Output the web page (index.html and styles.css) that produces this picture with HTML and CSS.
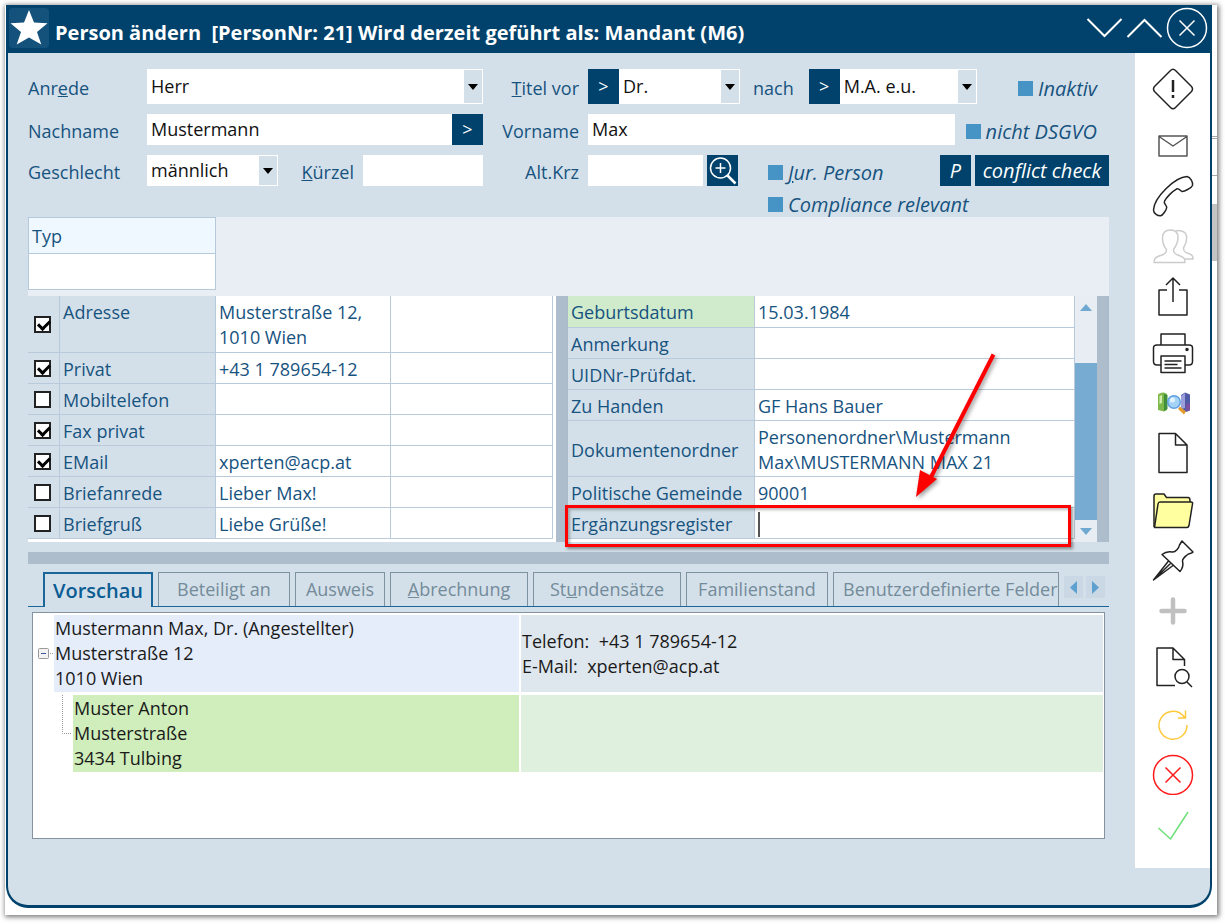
FILE: index.html
```html
<!DOCTYPE html>
<html lang="de">
<head>
<meta charset="utf-8">
<title>Person ändern</title>
<link rel="stylesheet" href="styles.css">
</head>
<body>
<div class="sheet">
<i class="edge-scroll"></i><i class="edge-line"></i><i class="edge-line edge-line-low"></i>
<main class="window">
  <header class="titlebar">
    <span class="star"><svg width="40" height="40" viewBox="0 0 40 40"><path fill="#fff" d="M20 2l5 12.500 13.500.8-10.500 8.700 4.300 12.500L20 29.500 7.700 36.500 12 24 1.500 15.300 15 14.500z"/></svg></span>
    <h1>Person ändern&nbsp; [PersonNr: 21] Wird derzeit geführt als: Mandant (M6)</h1>
    <div class="winbuttons">
      <button aria-label="Weiter"><svg width="37" height="20" viewBox="0 0 37 20"><path d="M1.500 1l17 17 17-17" fill="none" stroke="#fff" stroke-width="2"/></svg></button>
      <button aria-label="Zurück"><svg width="37" height="20" viewBox="0 0 37 20"><path d="M1.500 19l17-17 17 17" fill="none" stroke="#fff" stroke-width="2"/></svg></button>
      <button aria-label="Schließen"><svg width="42" height="42" viewBox="0 0 42 42" fill="none" stroke="#fff"><circle cx="21" cy="21" r="19.500" stroke-width="1.500"/><path d="M13.500 13.500l15 15m0-15l-15 15" stroke-width="1.500"/></svg></button>
    </div>
  </header>
  <div class="body">
    <div class="content">
      <form class="form">
        <div class="row row-tall">
          <label for="anrede">Anr<u>e</u>de</label>
          <div class="left"><span class="select grow"><select id="anrede"><option>Herr</option></select><i></i></span></div>
          <label class="second" for="titelvor"><u>T</u>itel vor</label>
          <div class="right">
            <button type="button" class="dark">&gt;</button><span class="select w-vor"><select id="titelvor"><option>Dr.</option></select><i></i></span>
            <label class="nach" for="titelnach">nach</label>
            <button type="button" class="dark">&gt;</button><span class="select w-nach"><select id="titelnach"><option>M.A. e.u.</option></select><i></i></span>
            <label class="check end"><input type="checkbox">Inaktiv</label>
          </div>
        </div>
        <div class="row">
          <label for="nachname">Nachname</label>
          <div class="left"><input class="grow" id="nachname" type="text" value="Mustermann"><button type="button" class="dark">&gt;</button></div>
          <label class="second" for="vorname">Vorname</label>
          <div class="right"><input class="grow" id="vorname" type="text" value="Max"><label class="check dsgvo"><input type="checkbox">nicht DSGVO</label></div>
        </div>
        <div class="row">
          <label for="geschlecht">Geschlecht</label>
          <div class="left"><span class="select w-sex"><select id="geschlecht"><option>männlich</option></select><i></i></span><label class="kuerzel" for="kuerzel"><u>K</u>ürzel</label><input class="grow" id="kuerzel" type="text"></div>
          <label class="second" for="altkrz">Alt.Krz</label>
          <div class="right">
            <input class="w-alt" id="altkrz" type="text"><button type="button" class="dark lens" aria-label="Suchen"><svg width="31" height="31" viewBox="0 0 31 31" fill="none" stroke="#fff"><circle cx="13.500" cy="13" r="10" stroke-width="1.500"/><path d="M8.500 13h10M13.500 8v10" stroke-width="1.500"/><path d="M20.500 20.500l8 8" stroke-width="2.500"/></svg></button>
            <label class="check jur"><input type="checkbox"><span><u>J</u>ur. Person</span></label>
            <span class="actions"><button type="button" class="dark ital">P</button><button type="button" class="dark ital conflict">conflict check</button></span>
          </div>
        </div>
        <div class="row row-last"><label class="check compliance"><input type="checkbox">Compliance relevant</label></div>
      </form>

      <section class="typpanel">
        <table class="typ"><tr><th>Typ</th></tr><tr><td></td></tr></table>
      </section>

      <section class="panes">
        <div class="pane-left">
        <table class="grid contact">
          <colgroup><col class="c-check"><col class="c-name"><col class="c-value"><col></colgroup>
          <tr><th><input type="checkbox" checked aria-label="Adresse"></th><th>Adresse</th><td>Musterstraße 12,<br>1010 Wien</td><td></td></tr>
          <tr><th><input type="checkbox" checked aria-label="Privat"></th><th>Privat</th><td>+43 1 789654-12</td><td></td></tr>
          <tr><th><input type="checkbox" aria-label="Mobiltelefon"></th><th>Mobiltelefon</th><td></td><td></td></tr>
          <tr><th><input type="checkbox" checked aria-label="Fax privat"></th><th>Fax privat</th><td></td><td></td></tr>
          <tr><th><input type="checkbox" checked aria-label="EMail"></th><th>EMail</th><td>xperten@acp.at</td><td></td></tr>
          <tr><th><input type="checkbox" aria-label="Briefanrede"></th><th>Briefanrede</th><td>Lieber Max!</td><td></td></tr>
          <tr><th><input type="checkbox" aria-label="Briefgruß"></th><th>Briefgruß</th><td>Liebe Grüße!</td><td></td></tr>
        </table>
        </div>
        <div class="vsplit"></div>
        <div class="pane-right">
          <table class="grid details">
            <colgroup><col class="c-label"><col></colgroup>
            <tr><th class="green">Geburtsdatum</th><td>15.03.1984</td></tr>
            <tr><th>Anmerkung</th><td></td></tr>
            <tr><th>UIDNr-Prüfdat.</th><td></td></tr>
            <tr><th>Zu Handen</th><td>GF Hans Bauer</td></tr>
            <tr><th>Dokumentenordner</th><td>Personenordner\Mustermann<br>Max\MUSTERMANN MAX 21</td></tr>
            <tr><th>Politische Gemeinde</th><td>90001</td></tr>
            <tr><th>Ergänzungsregister</th><td><i class="caret"></i></td></tr>
          </table>
          <div class="highlight"></div>
          <svg class="arrow" width="100" height="160" viewBox="0 0 100 160"><g fill="#f00"><path d="M86.500 9.500L22 136" stroke="#f00" stroke-width="4"/><path d="M9 152l4-27 17 9z"/></g></svg>
        </div>
        <div class="scroll"><button aria-label="Nach oben"><svg width="12" height="7"><path d="M0 7l6-7 6 7z" fill="#6fa8d0"/></svg></button><div class="track"></div><div class="thumb"></div><button aria-label="Nach unten"><svg width="12" height="7"><path d="M0 0l6 7 6-7z" fill="#6fa8d0"/></svg></button></div>
        <div class="vsplit"></div>
      </section>
      <div class="hsplit"></div>

      <nav class="tabs">
        <button class="tab active">Vorschau</button>
        <button class="tab t2">Beteiligt an</button>
        <button class="tab t3">Ausweis</button>
        <button class="tab t4"><u>A</u>brechnung</button>
        <button class="tab t5">St<u>u</u>ndensätze</button>
        <button class="tab t6">Familienstand</button>
        <button class="tab t7">Benutzerdefinierte Felder</button>
        <span class="tabnav"><button aria-label="Tabs links"><svg width="7" height="13"><path d="M7 0v13L0 6.500z" fill="#5ea1d0"/></svg></button><button aria-label="Tabs rechts"><svg width="7" height="13"><path d="M0 0v13l7-6.500z" fill="#5ea1d0"/></svg></button></span>
      </nav>

      <section class="tree">
        <div class="node">
          <span class="knob"><svg width="20" height="77" viewBox="0 0 20 77"><rect x="4.500" y="33.500" width="10" height="10" rx="1" fill="#f3f3f3" stroke="#999"/><path d="M7 38.500h5" stroke="#3b5aa5"/><path d="M16 38.500h4" stroke="#999" stroke-dasharray="1 1"/></svg></span>
          <p class="cell blue">Mustermann Max, Dr. (Angestellter)<br>Musterstraße 12<br>1010 Wien</p>
          <p class="cell pale info">Telefon:&nbsp; +43 1 789654-12<br>E-Mail:&nbsp; xperten@acp.at</p>
        </div>
        <div class="node child">
          <span class="knob"><svg width="39" height="77" viewBox="0 0 39 77"><path d="M28.500 0v38.500h9" fill="none" stroke="#999" stroke-dasharray="1 1"/></svg></span>
          <p class="cell lime">Muster Anton<br>Musterstraße<br>3434 Tulbing</p>
          <p class="cell mint"></p>
        </div>
      </section>
    </div>

    <aside class="tools">
      <div class="group">
        <button aria-label="Hinweis"><svg viewBox="0 0 42 42"><path d="M18.500 2.500q2.500-2.500 5 0l16 16q2 2.500 0 5l-16 16q-2.500 2.500-5 0l-16-16q-2-2.500 0-5z"/><path d="M21 12v12M21 27v3" stroke-width="2.500"/></svg></button>
      </div>
      <div class="group">
        <button aria-label="E-Mail"><svg viewBox="0 0 42 42"><path stroke="#555" d="M7 11h28v20H7zM7 11.500l14 9.500 14-9.500"/></svg></button>
        <button aria-label="Telefon"><svg viewBox="0 0 42 42"><path d="M35 1.500c-12 .5-33 21-33.500 33.500 0 3.500 4.500 6 7 5.800 2.500-.3 6-6.300 6.200-8.300.2-2-3.500-4-2.200-6.300 2-4 8-10 12.300-12.400 2.500-.8 3.200 2.300 5.200 2.600 2 .3 9.500-3.400 10.500-5.900.8-3-2-8.500-5.500-9z"/></svg></button>
        <button aria-label="Personen"><svg viewBox="0 0 42 42"><path stroke="#ccc" d="M2 37.500h31c0-5-2-5.500-6-7-4-1.300-5.500-2.500-5.500-6 3-4 4.500-8 4.500-12 0-5-3-7.500-7.500-7.500S10.500 7.500 10.500 13c0 4.500 1 8 4 11.500 0 3.500-1.500 4.700-6 6C4 32 2 33 2 37.500zM23.500 6.500c2-1.500 10-1.500 11 4.500.7 5-.5 8-3 12 0 3.500 1.500 4.500 5 5.500 3.500 1.500 4.500 2 4.500 5.500h-8"/></svg></button>
        <button aria-label="Teilen"><svg viewBox="0 0 42 42"><path d="M15 15H7v25h28V15h-8M21 27V3M14 10l7-7 7 7"/></svg></button>
      </div>
      <div class="group">
        <button aria-label="Drucken"><svg viewBox="0 0 42 42"><path d="M9 13V2h24v11M9 33H5q-3.500 0-3.500-3.500V16q0-3 3.500-3h32q3.500 0 3.500 3v13.500q0 3.500-3.500 3.500h-4M9 24h24v16.500H9zM12.500 29h17M12.500 32.500h13M12.500 36h17"/><circle cx="35" cy="17.500" r="1" fill="#222"/></svg></button>
        <button aria-label="Suche"><svg viewBox="0 0 42 42"><g stroke="none"><path fill="#7db84a" d="M6 13q0-2 6-2.500l3 1.500v16l-3 1.500-6-1.500z"/><path fill="#3f8f3c" d="M12 12l3.500 1v14L12 29z"/><path fill="#d3edb0" d="M7.500 14l2.500-1v8l-2.500 1z"/><path fill="#4f5ba6" d="M29 13l4-2.500 5 2v16l-4 1.500-5-3z"/><path fill="#9a9edb" d="M29 14l4-3v15l-4 1z"/><path fill="#7b4fa0" d="M34 22l4-1v7l-4 1z"/><circle cx="22" cy="20" r="7" fill="#5f9fe0"/><circle cx="22" cy="20" r="5.500" fill="#a5d3f7"/><circle cx="20.500" cy="18" r="2.500" fill="#e0f3ff"/><path fill="#e39a2d" d="M26 27l2-2.500 6 5-2 3z"/></g></svg></button>
        <button aria-label="Dokument"><svg viewBox="0 0 42 42"><path d="M7 1.500h16.500L35 13v27.500H7zM23.500 1.500V13H35"/></svg></button>
      </div>
      <div class="group">
        <button aria-label="Ordner"><svg viewBox="0 0 42 42"><path fill="#ffffa0" d="M2 38V7q0-2 2-2h8l2.500 3.500H36q2 0 2 3v3"/><path fill="#ffffa0" d="M2.500 38.500L6 15q.3-2 2-2h31q2 0 1.500 2L37 36.500q-.5 2-2 2z"/></svg></button>
        <button aria-label="Anheften"><svg viewBox="0 0 42 42"><path d="M30 2l11 11c-1.500 2-4 1-6 3-3 2.500-4.500 3.500-4.500 6 1 4-.3 8-2.500 10.500L10 15.500c3-2.500 6.500-3.300 10.500-2.500 3 .3 6.500-4 7-7zM16.500 22L1.500 41 21 26.500M1.500 41L19 24"/></svg></button>
        <button aria-label="Hinzufügen"><svg viewBox="0 0 42 42"><path stroke="#c0c0c0" stroke-width="4.500" stroke-linecap="round" d="M9.500 22h23M21 10.500v23"/></svg></button>
      </div>
      <div class="group">
        <button aria-label="Dokument suchen"><svg viewBox="0 0 42 42"><path d="M23 39.500H5V2h16l11.500 11.500V20M21 2v11.500h11.500M35 36l5 5"/><circle cx="30" cy="30.500" r="7"/></svg></button>
      </div>
      <div class="group">
        <button aria-label="Aktualisieren"><svg viewBox="0 0 42 42"><path stroke="#ffc93c" d="M35 22a14 14 0 1 1-4-9.500L33 15M33.500 7.500V15H26"/></svg></button>
        <button aria-label="Abbrechen"><svg viewBox="0 0 42 42"><g stroke="#ff1a1a"><circle cx="21" cy="22" r="19.500"/><path d="M13.500 14.500l15 15m0-15l-15 15"/></g></svg></button>
        <button aria-label="OK"><svg viewBox="0 0 42 42"><path stroke="#6fe07a" d="M6.500 25l12 11L36 9"/></svg></button>
      </div>
    </aside>
  </div>
</main>
</div>
</body>
</html>
```
FILE: styles.css
```css
* { box-sizing: border-box; }

body {
  margin: 0;
  padding: 5px 8px 9px 5px;
  min-height: 100vh;
  display: flex;
  background: #fff;
  color: #17537f;
  font: 18px/25px "Open Sans", "Noto Sans", sans-serif;
}

button, input, select {
  font: inherit;
  color: inherit;
  margin: 0;
  padding: 0;
  border: 0;
  border-radius: 0;
  background: none;
}

svg { display: block; }
p { margin: 0; }

.sheet {
  position: relative;
  flex: 1;
  display: flex;
  padding: 0 5px 7px 1px;
  box-shadow: 1px 1px 5px 1px #777;
}

.edge-scroll, .edge-line { position: absolute; right: 0; width: 5px; }
.edge-scroll { top: 199px; height: 57px; background: #c4c4c4; }
.edge-line { top: 131px; height: 3px; border: solid #aaa; border-width: 1px 0; }
.edge-line-low { top: 170px; border-bottom: 0; }

.window {
  position: relative;
  flex: 1;
  display: flex;
  flex-direction: column;
  border: solid #00426b;
  border-width: 0 2px 3px;
  border-radius: 0 0 22px 22px;
  background: #d4e0e9;
  overflow: hidden;
}

.titlebar {
  display: flex;
  align-items: center;
  height: 48px;
  padding: 0 2px 2px 1px;
  background: #00426b;
  color: #fff;
}
.star { border-radius: 4px; background: #14527c; }
.titlebar h1 {
  flex: 1;
  margin: 0;
  padding: 8px 0 0 6px;
  font-size: 20px;
  font-weight: 700;
  white-space: nowrap;
}
.winbuttons { display: flex; align-items: center; gap: 3px; }

.body { flex: 1; display: flex; align-items: flex-start; }
.content { flex: 1; min-width: 0; padding: 16px 26px 0 20px; }

/* form */
.form { display: flex; flex-direction: column; gap: 10px; }
.row { display: grid; grid-template-columns: 119px 336px 105px 1fr; align-items: stretch; height: 31px; }
.row-tall { height: 35px; }
.row-last { display: flex; height: 21px; align-items: flex-start; }
.row > label, .right > label, .left > label { display: flex; align-items: center; padding-top: 4px; white-space: pre; }
.row > .second { justify-content: flex-end; padding-right: 9px; }
.left, .right { display: flex; min-width: 0; }
.grow { flex: 1; min-width: 0; }
.row input[type="text"] { padding: 0 4px; background: #fff; color: #111; }

.select { display: grid; grid-template-columns: 1fr 19px; background: #fff; }
.select select {
  grid-area: 1 / 1 / 2 / 3;
  appearance: none;
  padding: 0 4px;
  color: #111;
}
.select i {
  grid-area: 1 / 2;
  display: grid;
  place-items: center;
  margin: 1px 1px 1px 0;
  background: #d4e0e9;
  pointer-events: none;
}
.select i::after {
  content: "";
  border: solid transparent;
  border-width: 6px 5px 0;
  border-top-color: #000;
}
.w-vor { width: 121px; }
.w-nach { width: 137px; }
.w-sex { width: 131px; }
.row .w-alt { width: 115px; }

.dark { width: 31px; background: #00426b; color: #fff; }
.dark.ital { font-size: 20px; font-style: italic; }
.dark.conflict { width: 134px; }
.lens { margin-left: 4px; }
.actions { display: flex; gap: 4px; margin-left: auto; }
.right .nach { padding: 4px 15px 0 13px; }
.left .kuerzel { width: 85px; justify-content: flex-end; padding-right: 9px; }

.row .check { display: flex; align-items: center; gap: 5px; font-size: 20px; font-style: italic; }
.check input { appearance: none; width: 15px; height: 15px; background: #4694c6; }
.right .end { margin-left: auto; padding-right: 12px; }
.right .dsgvo { padding-left: 11px; padding-right: 12px; }
.right .jur { margin-left: 30px; }
.row .compliance { padding: 0 0 0 740px; margin-top: -4px; }

/* type list */
.typpanel { height: 79px; background: #e8eef3; }
.typ { width: 188px; border-collapse: collapse; }
.typ th, .typ td { height: 36px; padding: 2px 3px 0; border: 1px solid #b5c9da; font-weight: 400; text-align: left; background: #f0f8ff; }
.typ td { background: #fff; }

/* data panes */
.panes { display: flex; height: 246px; background: #fff; }
.pane-left { flex: 525; }
.pane-right { position: relative; flex: 507; }
.vsplit { width: 12px; background: #aebdcb; border-right: 1px solid #a9bac9; }
.pane-left + .vsplit { margin-left: 3px; }
.grid { width: 100%; border-spacing: 0; table-layout: fixed; }
.grid th, .grid td {
  height: 31px;
  padding: 4px 3px 1px;
  border: solid #b9cbdb;
  border-width: 0 1px 1px 0;
  font-weight: 400;
  text-align: left;
  white-space: nowrap;
}
.grid tr:first-child > * { padding-bottom: 2px; }
.grid th { background: #d4e0e9; }
.grid .green { background: #d0ebcc; }
.contact tr:first-child th:nth-child(2) { vertical-align: top; }
.contact tr th:first-child { padding: 0 0 0 6px; }
.c-check { width: 32px; }
.c-name { width: 156px; }
.c-value { width: 175px; }
.c-label { width: 187px; }
.contact input { appearance: none; display: block; width: 17px; height: 17px; border: 2px solid #222; background: #fff; }
.contact input:checked::after {
  content: "";
  display: block;
  width: 9px;
  height: 5px;
  margin: 2px;
  border: solid #000;
  border-width: 0 0 3px 3px;
  transform: rotate(-45deg);
}
.caret { display: block; width: 2px; height: 25px; background: #555; }
.highlight {
  position: absolute;
  left: -3px;
  right: 4px;
  bottom: -5px;
  height: 42px;
  border: 3px solid #f00;
  box-shadow: 2px 2px 3px #0006, inset 2px 2px 3px #0004;
}
.arrow { position: absolute; right: 68px; top: 49px; filter: drop-shadow(2px 2px 2px #0006); }
.scroll { width: 22px; display: flex; flex-direction: column; background: #e8edf3; }
.scroll button { height: 22px; display: grid; place-items: center; }
.track { height: 45px; }
.thumb { flex: 1; background: #78abd1; }
.hsplit { height: 12px; margin-top: 10px; background: #aebdcb; }

/* tabs */
.tabs { display: flex; gap: 5px; height: 35px; margin-top: 8px; padding-left: 15px; box-shadow: inset 0 -1px #1b6698; }
.tab {
  border: 1px solid #7e919e;
  border-bottom: 0;
  margin-bottom: 1px;
  color: #738b9a;
  white-space: nowrap;
  overflow: hidden;
}
.tab.active { width: 110px; margin-bottom: 0; border: 2px solid #1b6698; border-bottom: 0; background: #d4e0e9; color: #0a5c92; font-size: 20px; font-weight: 600; }
.t2 { width: 132px; }
.t3 { width: 90px; }
.t4 { width: 138px; }
.t5 { width: 148px; }
.t6 { width: 142px; }
.t7 { flex: 1; min-width: 0; padding-left: 9px; text-align: left; }
.tabnav { display: flex; gap: 3px; padding: 4px 4px 0 0; }
.tabnav button { width: 19px; height: 22px; display: grid; place-items: center; background: #c9d8e4; }

/* preview tree */
.tree { min-height: 227px; margin: 5px 4px 0; padding: 2px 1px; border: 1px solid #8592a0; background: #fff; color: #1a1a1a; }
.node { display: flex; gap: 2px; height: 77px; margin-bottom: 3px; }
.knob { width: 20px; margin-right: -2px; }
.child .knob { width: 39px; }
.cell { flex: 583; padding: 1px; white-space: nowrap; }
.blue { flex: 0 0 465px; background: #e5edfb; }
.lime { flex: 0 0 446px; background: #d0eebb; }
.pale { background: #dfe7ee; }
.mint { background: #dff0de; }
.info { padding-top: 14px; }

/* toolbar */
.tools { width: 75px; padding: 15px 0 23px; display: flex; flex-direction: column; gap: 15px; background: #fff; }
.group { display: flex; flex-direction: column; align-items: center; gap: 8px; }
.group svg { width: 42px; height: 42px; fill: none; stroke: #222; stroke-width: 1.5px; stroke-linejoin: round; }
```
